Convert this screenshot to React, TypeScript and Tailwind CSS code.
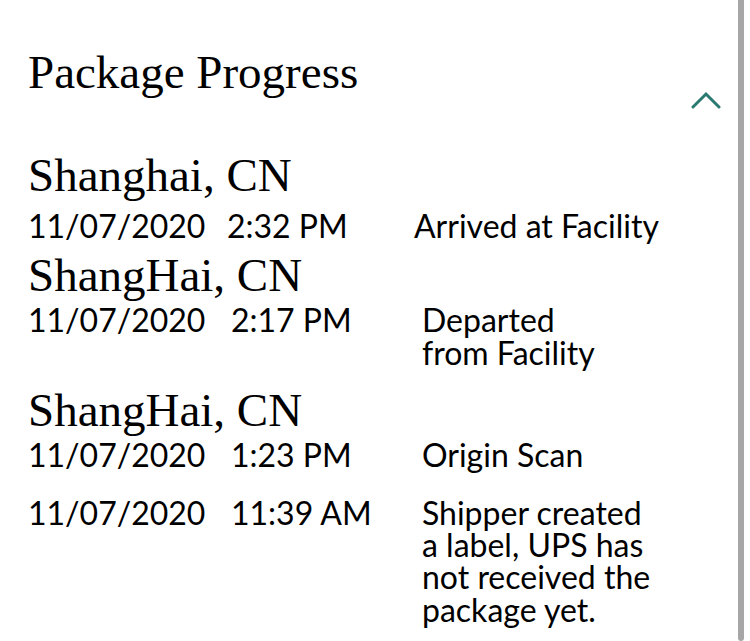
import { Fragment } from 'react';

type Evento = {
  data: string;
  hora: string;
  descricao: string[];
};

type Grupo = {
  local: string;
  espaco: string;
  colunas: string;
  eventos: Evento[];
};

const grupos: Grupo[] = [
  {
    local: 'Shanghai, CN',
    espaco: 'mt-[43px]',
    colunas: 'grid-cols-[199px_187px_1fr]',
    eventos: [{ data: '11/07/2020', hora: '2:32 PM', descricao: ['Arrived at Facility'] }],
  },
  {
    local: 'ShangHai, CN',
    espaco: 'mt-[10px]',
    colunas: 'grid-cols-[203px_191px_1fr]',
    eventos: [{ data: '11/07/2020', hora: '2:17 PM', descricao: ['Departed', 'from Facility'] }],
  },
  {
    local: 'ShangHai, CN',
    espaco: 'mt-[18px]',
    colunas: 'grid-cols-[203px_191px_1fr]',
    eventos: [
      { data: '11/07/2020', hora: '1:23 PM', descricao: ['Origin Scan'] },
      {
        data: '11/07/2020',
        hora: '11:39 AM',
        descricao: ['Shipper created', 'a label, UPS has', 'not received the', 'package yet.'],
      },
    ],
  },
];

const serif = { fontFamily: '"Liberation Serif", "Times New Roman", serif' };
const sans = { fontFamily: 'Lato, "Open Sans", sans-serif' };

export default function App() {
  return (
    <div className="flex h-[641px] w-[750px] overflow-hidden bg-white text-black">
      <main className="flex-1 pl-[28px] pr-[17px] pt-[49px]">
        {/* Header */}
        <div className="flex justify-between">
          <h2 className="text-[47px] leading-none font-normal" style={serif}>
            Package Progress
          </h2>
          <svg width="30" height="18" viewBox="0 0 30 18" className="mt-[42px]" fill="none">
            <polyline
              points="2,16 15,3 28,16"
              stroke="#2b7a72"
              strokeWidth="3"
              strokeLinecap="round"
              strokeLinejoin="miter"
            />
          </svg>
        </div>

        {/* Eventos por local */}
        {grupos.map((grupo, gi) => (
          <Fragment key={gi}>
            <h3 className={`${grupo.espaco} text-[47px] leading-none font-normal`} style={serif}>
              {grupo.local}
            </h3>
            {grupo.eventos.map((evento, ei) => (
              <div
                key={ei}
                className={`grid ${grupo.colunas} ${ei === 0 ? (gi === 0 ? 'mt-[11px]' : 'mt-[5px]') : 'mt-[25px]'} text-[32px] leading-[32px]`}
                style={sans}
              >
                <span>{evento.data}</span>
                <span>{evento.hora}</span>
                <div className="whitespace-nowrap leading-[32.4px]">
                  {evento.descricao.map((linha, li) => (
                    <div key={li}>{linha}</div>
                  ))}
                </div>
              </div>
            ))}
          </Fragment>
        ))}
      </main>

      {/* Scrollbar */}
      <div className="mr-[6px] w-[6px] self-stretch rounded-b-[3px] bg-[#a6a6a6]" />
    </div>
  );
}
